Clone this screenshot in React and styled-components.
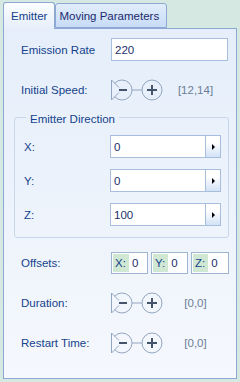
import React from 'react';
import styled, { createGlobalStyle } from 'styled-components';

const GlobalStyle = createGlobalStyle`
  html, body {
    margin: 0;
    padding: 0;
    background: #d5e9e2;
  }
  body {
    font-family: "Liberation Sans", Arial, sans-serif;
    font-size: 11px;
    color: #15428b;
  }
`;

const Window = styled.div`
  width: 240px;
  height: 382px;
  box-sizing: border-box;
  padding: 2px 3px 3px 3px;
  display: flex;
  flex-direction: column;
`;

const TabStrip = styled.div`
  display: flex;
  align-items: flex-end;
  height: 26px;
  position: relative;
  z-index: 1;
`;

const Tab = styled.div`
  box-sizing: border-box;
  height: ${p => (p.active ? '27px' : '25px')};
  margin-bottom: ${p => (p.active ? '-1px' : '0')};
  padding: 0 7px 0 ${p => (p.active ? '7px' : '3px')};
  display: flex;
  align-items: center;
  border: 1px solid #8da9d3;
  border-bottom: ${p => (p.active ? 'none' : '1px solid #8da9d3')};
  border-radius: 3px 3px 0 0;
  background: ${p =>
    p.active
      ? 'linear-gradient(#fbfdff, #e6eefa)'
      : 'linear-gradient(#e2edfb, #c7dcf6)'};
  color: ${p => (p.active ? '#15428b' : '#202a6e')};
  font-size: 11.5px;
  white-space: nowrap;
`;

const Panel = styled.div`
  flex: 1;
  border: 1px solid #8da9d3;
  background: linear-gradient(#e5eefa, #f5f8fd);
  padding: 9px 8px 0 17px;
  display: flex;
  flex-direction: column;
`;

const Row = styled.div`
  display: flex;
  align-items: center;
  height: ${p => p.h || 23}px;
  margin-top: ${p => p.mt || 0}px;
`;

const Label = styled.div`
  width: ${p => p.w || 90}px;
  flex-shrink: 0;
  font-size: 11.5px;
  color: #15428b;
  white-space: nowrap;
`;

const TextBox = styled.div`
  flex: 1;
  height: 100%;
  box-sizing: border-box;
  border: 1px solid #a7bedc;
  background: #fff;
  display: flex;
  align-items: center;
  padding-left: 3px;
  color: #1b2f6a;
  font-size: 11.5px;
`;

const Group = styled.fieldset`
  margin: 8px -1px 0 -7px;
  padding: 3px 7px 11px 9px;
  border: 1px solid #c9d7ea;
  border-radius: 3px;
  display: flex;
  flex-direction: column;
  gap: 11px;
`;

const Legend = styled.legend`
  margin-left: 2px;
  padding: 4px 4px 0;
  line-height: 10px;
  font-size: 11.5px;
  color: #15428b;
`;

const SpinBox = styled.div`
  flex: 1;
  height: 100%;
  box-sizing: border-box;
  border: 1px solid #a7bedc;
  background: #fff;
  display: flex;
`;

const SpinValue = styled.div`
  flex: 1;
  display: flex;
  align-items: center;
  padding-left: 3px;
  color: #1b2f6a;
  font-size: 11.5px;
`;

const SpinButton = styled.div`
  width: 14px;
  border-left: 1px solid #a7bedc;
  background: linear-gradient(#ffffff 30%, #d3e2f6);
  display: flex;
  align-items: center;
  justify-content: center;
  &::after {
    content: '';
    border-left: 3px solid #000;
    border-top: 3px solid transparent;
    border-bottom: 3px solid transparent;
  }
`;

const Offsets = styled.div`
  flex: 1;
  display: flex;
  gap: 3px;
  height: 100%;
`;

const OffsetBox = styled.div`
  width: ${p => p.w}px;
  flex: ${p => (p.grow ? 1 : 'none')};
  box-sizing: border-box;
  border: 1px solid #9fb4d1;
  background: #fff;
  display: flex;
  align-items: center;
  padding: 1px;
  margin-right: ${p => (p.grow ? '-1px' : '0')};
`;

const OffsetLabel = styled.span`
  align-self: stretch;
  display: flex;
  align-items: center;
  background: #cfe7d3;
  color: #15428b;
  padding: 0 3px 0 2px;
  font-size: 11.5px;
`;

const OffsetValue = styled.span`
  padding-left: 3px;
  color: #1b2f6a;
  font-size: 11.5px;
`;

const Range = styled.div`
  flex: 1;
  text-align: center;
  color: #6c7e94;
  font-size: 11.5px;
`;

// minus knob with the ">" wedge, a connector, and the plus knob
const SpinnerIcon = () => (
  <svg width="52" height="24" viewBox="0 0 52 24" style={{ flexShrink: 0 }}>
    <g fill="none" stroke="#93a6bf" strokeWidth="1">
      <path d="M0.5 2 V22 M0.5 2 L8 9.5 M0.5 22 L8 14.5" />
      <path d="M3.7 5.2 A10 10 0 1 1 3.7 18.8" />
      <path d="M21 12 H31" />
      <circle cx="41" cy="12" r="10" />
    </g>
    <g fill="#44546b">
      <rect x="8" y="11" width="8" height="2" />
      <rect x="36" y="11" width="10" height="2" />
      <rect x="40" y="7" width="2" height="10" />
    </g>
  </svg>
);

const Spinner = ({ range }) => (
  <>
    <SpinnerIcon />
    <Range>{range}</Range>
  </>
);

const NumberField = ({ value }) => (
  <SpinBox>
    <SpinValue>{value}</SpinValue>
    <SpinButton />
  </SpinBox>
);

export default function App() {
  return (
    <Window>
      <GlobalStyle />
      <TabStrip>
        <Tab active>Emitter</Tab>
        <Tab>Moving Parameters</Tab>
      </TabStrip>
      <Panel>
        <Row h={23}>
          <Label>Emission Rate</Label>
          <TextBox>220</TextBox>
        </Row>
        <Row h={24} mt={17}>
          <Label>Initial Speed:</Label>
          <Spinner range="[12,14]" />
        </Row>
        <Group>
          <Legend>Emitter Direction</Legend>
          <Row h={23} mt={8}>
            <Label w={86}>X:</Label>
            <NumberField value="0" />
          </Row>
          <Row h={23}>
            <Label w={86}>Y:</Label>
            <NumberField value="0" />
          </Row>
          <Row h={23}>
            <Label w={86}>Z:</Label>
            <NumberField value="100" />
          </Row>
        </Group>
        <Row h={22} mt={14}>
          <Label>Offsets:</Label>
          <Offsets>
            <OffsetBox w={37}>
              <OffsetLabel>X:</OffsetLabel>
              <OffsetValue>0</OffsetValue>
            </OffsetBox>
            <OffsetBox w={37}>
              <OffsetLabel>Y:</OffsetLabel>
              <OffsetValue>0</OffsetValue>
            </OffsetBox>
            <OffsetBox grow>
              <OffsetLabel>Z:</OffsetLabel>
              <OffsetValue>0</OffsetValue>
            </OffsetBox>
          </Offsets>
        </Row>
        <Row h={24} mt={17}>
          <Label>Duration:</Label>
          <Spinner range="[0,0]" />
        </Row>
        <Row h={24} mt={16}>
          <Label>Restart Time:</Label>
          <Spinner range="[0,0]" />
        </Row>
      </Panel>
    </Window>
  );
}
